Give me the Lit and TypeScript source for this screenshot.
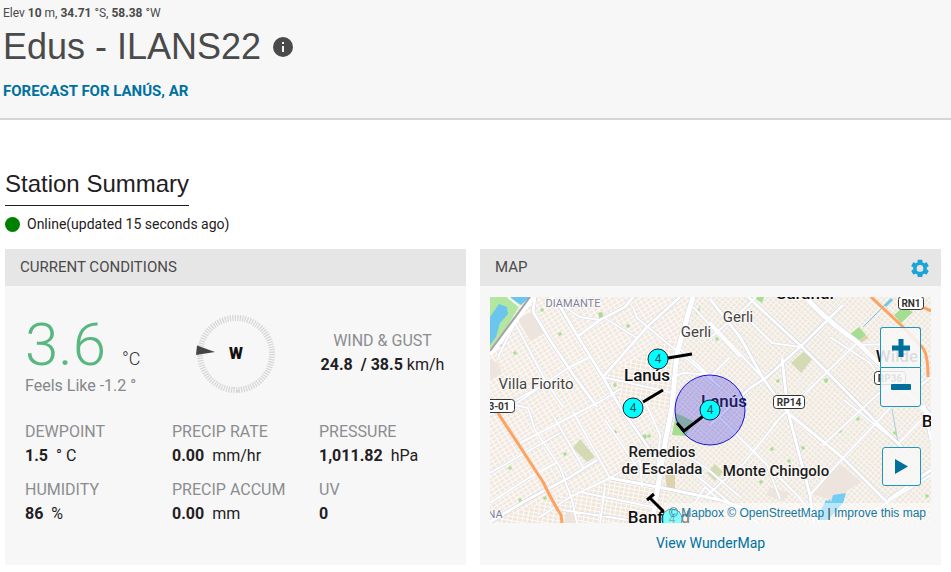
import { LitElement, html, svg, css } from 'lit';
import { customElement, property } from 'lit/decorators.js';

interface Reading {
  label: string;
  value: string;
  unit: string;
}

const readings: Reading[] = [
  { label: 'DEWPOINT', value: '1.5', unit: '° C' },
  { label: 'PRECIP RATE', value: '0.00', unit: 'mm/hr' },
  { label: 'PRESSURE', value: '1,011.82', unit: 'hPa' },
  { label: 'HUMIDITY', value: '86', unit: '%' },
  { label: 'PRECIP ACCUM', value: '0.00', unit: 'mm' },
  { label: 'UV', value: '0', unit: '' },
];

const minorRoads = [
  'M8 60 25 26 55 83 73 110', 'M25 108 38 111 45 133 70 170 82 203 87 226',
  'M83 115 120 181', 'M115 123 147 170', 'M143 10 147 21 177 46 190 56 230 90',
  'M113 20 147 41', 'M27 106 78 71 100 60', 'M0 118 24 104 60 84', 'M0 176 70 136',
  'M30 146 113 103 130 92', 'M0 206 40 180 66 166', 'M50 220 80 200 120 181 150 163',
  'M90 195 162 210', 'M73 213 157 226', 'M113 80 183 96', 'M183 80 193 76 230 78',
  'M203 10 250 60', 'M221 40 252 14 266 0', 'M188 50 210 70 224 84',
  'M220 25 273 81', 'M283 128 337 75 367 46', 'M333 148 387 98 404 84',
  'M220 111 307 198 330 226', 'M240 178 254 166 287 125', 'M215 200 254 166',
  'M320 198 353 161 387 125 433 75', 'M409 146 438 116', 'M354 103 408 146',
  'M196 170 240 206 268 226', 'M183 150 215 170 250 200', 'M380 216 441 178',
  'M60 0 90 20 110 23', 'M250 14 282 46 310 50', 'M340 40 380 66 400 96',
  'M368 48 400 47 428 52', 'M430 110 441 118', 'M426 92 441 80',
  'M115 190 110 226', 'M150 163 152 190', 'M276 165 290 202', 'M64 120 94 172',
  'M153 100 170 138 168 170', 'M205 206 215 190 230 204', 'M240 60 220 80',
];

const majorRoads = [
  'M45 0 43 15 62 46 82 76 107 110', 'M62 0 68 6 90 43 113 80 130 110 165 160',
  'M87 40 110 23 135 10 143 0', 'M190 0 157 30 113 80', 'M0 225 37 203 80 180 107 163',
  'M120 181 183 193 230 203 262 214', 'M258 0 313 51 337 75 387 126 420 158',
  'M220 128 260 91 277 80 310 50 353 8', 'M220 2 250 40 273 81 297 115 353 161 398 206',
  'M292 61 298 115 320 198 324 226', 'M398 203 441 173', 'M434 108 441 143',
];

const trees = [
  [52, 13], [70, 37], [138, 29], [25, 56], [125, 88], [101, 61], [20, 171], [30, 203],
  [55, 201], [75, 157], [159, 139], [125, 135], [227, 42], [288, 84], [336, 84], [336, 83],
  [350, 134], [405, 136], [368, 122], [299, 164], [271, 185], [313, 151], [437, 199], [282, 152],
];

const places = [
  { name: 'DIAMANTE', x: 83, y: 10, kind: 'district' },
  { name: 'NA', x: 5, y: 221, kind: 'district' },
  { name: 'Gerli', x: 248, y: 25, kind: 'town' },
  { name: 'Gerli', x: 206, y: 40, kind: 'town' },
  { name: 'Villa Fiorito', x: 46, y: 92, kind: 'town' },
  { name: 'Sarandí', x: 315, y: 2, kind: 'city' },
  { name: 'Lanús', x: 157, y: 84, kind: 'city' },
  { name: 'Lanús', x: 234, y: 110, kind: 'city' },
  { name: 'Wilde', x: 407, y: 65, kind: 'city' },
  { name: 'Remedios', x: 172, y: 160, kind: 'suburb' },
  { name: 'de Escalada', x: 172, y: 177, kind: 'suburb' },
  { name: 'Monte Chingolo', x: 286, y: 179, kind: 'suburb' },
  { name: 'Banfield', x: 169, y: 226, kind: 'city' },
  { name: 'B', x: 437, y: 130, kind: 'city' },
];

const shields = [
  { name: 'RN1', x: 421, y: 6, width: 25 },
  { name: 'RP14', x: 299, y: 105, width: 31 },
  { name: 'RP36', x: 400, y: 81, width: 31 },
  { name: '3-01', x: 9, y: 109, width: 31 },
];

const stations = [
  { x: 168, y: 62, barb: 'M178 61 202 57' },
  { x: 143, y: 111, barb: 'M153 105 173 93' },
  { x: 220, y: 113, barb: 'M216 117 194 134 187 126' },
  { x: 182, y: 222, barb: 'M174 215 160 201M157 203 164 197' },
];

@customElement('station-map')
class StationMap extends LitElement {
  static styles = css`
    :host {
      display: block;
      position: relative;
      overflow: hidden;
      font-family: Roboto, sans-serif;
    }
    .canvas {
      display: block;
      width: 100%;
      height: 226px;
    }
    .road {
      fill: none;
      stroke-linejoin: round;
    }
    .casing {
      stroke: #d9dcea;
      stroke-width: 3;
    }
    .minor {
      stroke: #fff;
      stroke-width: 2;
    }
    .casing-major {
      stroke: #cdd1e3;
      stroke-width: 4;
    }
    .major {
      stroke: #fff;
      stroke-width: 3;
    }
    .casing-trunk {
      stroke: #d3d7e6;
      stroke-width: 6;
    }
    .trunk {
      stroke: #fff;
      stroke-width: 5;
    }
    .highway {
      stroke: #fda262;
      stroke-width: 3;
    }
    .place {
      text-anchor: middle;
      stroke: #fff;
      stroke-width: 2;
      stroke-opacity: 0.7;
      paint-order: stroke;
    }
    .district {
      font-size: 11px;
      fill: #7c819c;
    }
    .town {
      font-size: 15px;
      fill: #444;
    }
    .suburb {
      font-size: 15px;
      font-weight: 500;
      fill: #1b1b1b;
    }
    .city {
      font-size: 17px;
      font-weight: 500;
      fill: #111;
    }
    .shield {
      fill: #fff;
      stroke: #333;
    }
    .shield-text {
      font-size: 10px;
      font-weight: 700;
      text-anchor: middle;
      fill: #333;
    }
    .barb {
      fill: none;
      stroke: #000;
      stroke-width: 3;
    }
    .dot {
      fill: #00ffff;
      stroke: #123;
      stroke-width: 1;
    }
    .dot-text {
      font-size: 12px;
      text-anchor: middle;
      fill: #14595c;
    }
    .zoom {
      position: absolute;
      top: 30px;
      right: 10px;
      display: flex;
      flex-direction: column;
    }
    .button {
      box-sizing: border-box;
      width: 41px;
      height: 40px;
      padding: 0;
      display: flex;
      align-items: center;
      justify-content: center;
      border: 1px solid #1c97bd;
      border-radius: 3px;
      background: rgba(247, 247, 247, 0.88);
      color: #006f9c;
      cursor: pointer;
    }
    .zoom-in {
      border-bottom: 0;
      border-radius: 3px 3px 0 0;
    }
    .zoom-out {
      border-radius: 0 0 3px 3px;
    }
    .play {
      position: absolute;
      right: 10px;
      bottom: 37px;
      width: 39px;
      height: 39px;
    }
    .attribution {
      position: absolute;
      right: 0;
      bottom: 0;
      padding: 0 5px;
      font: 12px/20px 'Liberation Sans', Arial, sans-serif;
      white-space: nowrap;
      color: #222;
      background: rgba(255, 255, 255, 0.5);
    }
    .attribution a {
      color: #1478a3;
      text-decoration: none;
    }
  `;

  render() {
    return html`
      <svg class="canvas" viewBox="0 0 441 226" preserveAspectRatio="xMidYMid slice" role="img" aria-label="Station map">
        <defs>
          <pattern id="west" width="5" height="4" patternUnits="userSpaceOnUse" patternTransform="rotate(-32)">
            <rect width="5" height="4" fill="#f1e9e1" />
            <path d="M0 0H5M0 0V4" stroke="#fdfaf6" stroke-width="2" />
          </pattern>
          <pattern id="east" width="4" height="4" patternUnits="userSpaceOnUse" patternTransform="rotate(42)">
            <rect width="4" height="4" fill="#eee7dd" />
            <path d="M0 0H4M0 0V4" stroke="#faf7f2" stroke-width="2" />
          </pattern>
          <pattern id="south" width="5" height="4" patternUnits="userSpaceOnUse" patternTransform="rotate(10)">
            <rect width="5" height="4" fill="#efe6dc" />
            <path d="M0 0H5M0 0V4" stroke="#fefbf7" stroke-width="2" />
          </pattern>
          <pattern id="hatch" width="3" height="3" patternUnits="userSpaceOnUse" patternTransform="rotate(40)">
            <path d="M0 0H3M0 0V3" stroke="#5a4ad0" stroke-opacity="0.15" />
          </pattern>
        </defs>
        ${this.renderLand()} ${this.renderRoads()}
        ${shields.map((shield) => this.renderShield(shield))}
        ${places.map((place) => svg`<text class="place ${place.kind}" x=${place.x} y=${place.y}>${place.name}</text>`)}
        <circle cx="220" cy="113" r="35" fill="#3c32e6" fill-opacity="0.27" />
        <circle cx="220" cy="113" r="35" fill="url(#hatch)" stroke="#1a14d8" />
        ${stations.map((station) => this.renderStation(station))}
      </svg>
      <div class="zoom">
        <button class="button zoom-in" aria-label="Zoom in">
          <svg width="18" height="18" viewBox="0 0 18 18"><path fill="currentColor" d="M6.500 0h5v6.500h6.500v5h-6.500v6.500h-5v-6.500H0v-5h6.500z" /></svg>
        </button>
        <button class="button zoom-out" aria-label="Zoom out">
          <svg width="20" height="6" viewBox="0 0 20 6"><rect width="20" height="6" rx="1" fill="currentColor" /></svg>
        </button>
      </div>
      <button class="button play" aria-label="Play">
        <svg width="13" height="15" viewBox="0 0 13 15"><path fill="currentColor" d="M0 0 13 7.500 0 15z" /></svg>
      </button>
      <div class="attribution">
        <a href="#mapbox">© Mapbox</a> <a href="#osm">© OpenStreetMap</a> | <a href="#improve">Improve this map</a>
      </div>
    `;
  }

  renderLand() {
    return svg`
      <rect width="441" height="226" fill="url(#east)" />
      <path fill="url(#west)" d="M0 0H203L182 110 120 181 0 226z" />
      <path fill="url(#south)" d="M120 181 183 193 162 226H0L80 195z" />
      <path fill="url(#south)" d="M113 80 187 40 182 113 130 106z" />
      <path fill="#ede5dd" d="M28 22 44 14 55 36 40 44z" />
      <path fill="#ede5dd" d="M0 62 8 66 12 76 0 84z" />
      <path fill="#ede5dd" d="M349 166 372 185 341 203 319 196z" />
      <path fill="#ede5dd" d="M280 190 300 196 292 204 276 198z" />
      <path fill="#ede5dd" d="M76 214 84 212 86 226H74z" />
      <path fill="#b3e6a0" d="M0 0H24L30 8 17 30 0 52z" />
      <path fill="#6cc5ec" d="M9 7 17 10 18 17 10 26 6 40 0 48V20z" />
      <path fill="#6cc5ec" d="M20 0H40L31 8z" />
      <path fill="#6cc5ec" d="M10 47 15 50 13 51z" />
      <path fill="none" stroke="#fff" stroke-width="2" d="M18 0 29 9" />
      <path fill="#a5dd91" d="M359 38 369 30 376 38 366 46zM404 18 413 10 423 15 411 26zM263 0H274L272 6z" />
      <path fill="#a5dd91" d="M108 16 112 15 114 22 110 23zM206 17 210 9 209 17zM151 139 156 137 157 141 151 143z" />
      <path fill="#a5dd91" d="M182 138 186 116 203 124 196 139z" />
      <path fill="#d3dab4" d="M301 66 313 55 323 61 311 76zM83 151 90 142 105 160 97 165zM217 176 225 167 233 175 225 184z" />
      <path fill="#ded2ac" d="M175 178H185V192H177zM366 46 376 38 379 41 369 47z" />
      <path fill="#73cef3" d="M343 198 356 196 353 206 338 223H326L336 203 338 204 340 202 341 205z" />
      <path fill="none" stroke="#a9cfe0" d="M402 112 408 146" />
      <path fill="none" stroke="#73c6e8" d="M401 2 373 30" />
      <path fill="none" stroke="#73c6e8" stroke-width="3" d="M402 2 395 9" />
      ${trees.map(([x, y]) => svg`<path fill="#a9df95" d="M${x - 2} ${y - 1}l3-1 1 3-3 1z" />`)}
    `;
  }

  renderRoads() {
    const minor = minorRoads.join('');
    const major = majorRoads.join('');
    const trunk = 'M203 0 187 56 182 110 175 146 162 226M316 0Q330 18 367 45L393 70 441 120';
    return svg`
      <path class="road casing" d=${minor} />
      <path class="road casing-major" d=${major} />
      <path class="road casing-trunk" d=${trunk} />
      <path class="road minor" d=${minor} />
      <path class="road major" d=${major} />
      <path class="road trunk" d=${trunk} />
      <path class="road trunk" d="M43 0 0 57" />
      <path class="road" stroke="#a3a3a8" stroke-width="2" d="M40 0 0 54" />
      <path class="road highway" d="M381 0 411 28 432 50Q438 56 438 80M428 8 441 14M8 116 53 185Q62 204 71 218L72 226" />
    `;
  }

  renderShield(shield: { name: string; x: number; y: number; width: number }) {
    return svg`
      <rect class="shield" x=${shield.x - shield.width / 2} y=${shield.y - 6.5} width=${shield.width} height="13" rx="3" />
      <text class="shield-text" x=${shield.x} y=${shield.y + 3.5}>${shield.name}</text>
    `;
  }

  renderStation(station: { x: number; y: number; barb: string }) {
    return svg`
      <path class="barb" d=${station.barb} />
      <circle class="dot" cx=${station.x} cy=${station.y} r="10" />
      <text class="dot-text" x=${station.x} y=${station.y + 4}>4</text>
    `;
  }
}

@customElement('current-conditions')
class CurrentConditions extends LitElement {
  @property({ type: Array }) readings: Reading[] = [];

  static styles = css`
    :host {
      display: block;
      padding: 29px 10px 0;
      font: 16px/24px Roboto, sans-serif;
      color: #1f2023;
    }
    .grid {
      display: grid;
      grid-template-columns: repeat(3, 1fr);
    }
    .now {
      padding-bottom: 22px;
    }
    .cell {
      padding: 0 10px 10px;
      white-space: nowrap;
    }
    .temp {
      padding: 0 10px;
      white-space: nowrap;
      color: #85878a;
    }
    .reading {
      display: flex;
      align-items: baseline;
      gap: 16px;
      height: 59px;
    }
    .degrees {
      font-size: 60px;
      font-weight: 300;
      line-height: 60px;
      color: #57b77e;
    }
    .unit {
      font-size: 18px;
      font-weight: 300;
      color: #333;
    }
    .rose {
      display: flex;
      justify-content: center;
      align-items: flex-start;
    }
    .compass {
      width: 80px;
      height: 78px;
      overflow: visible;
    }
    .direction {
      font-size: 16px;
      font-weight: 900;
      text-anchor: middle;
      fill: #111;
    }
    .wind {
      padding-top: 14px;
      text-align: center;
      white-space: nowrap;
    }
    .label {
      color: #8b8d90;
    }
    .amount {
      margin-right: 4px;
    }
  `;

  render() {
    return html`
      <div class="grid now">
        <div class="temp">
          <div class="reading"><span class="degrees">3.6</span><span class="unit">°C</span></div>
          Feels Like -1.2 °
        </div>
        <div class="rose">
          <svg class="compass" viewBox="0 0 80 78" role="img" aria-label="Wind from the west">
            <circle cx="40" cy="39" r="36" fill="none" stroke="#d6d6d6" stroke-width="6" pathLength="180" stroke-dasharray="1 1" />
            <path fill="#444" d="M1 30.500 19 37 0 40z" />
            <text class="direction" x="40" y="44">W</text>
          </svg>
        </div>
        <div class="wind">
          <div class="label">WIND &amp; GUST</div>
          <b>24.8 &nbsp;/ 38.5</b> km/h
        </div>
      </div>
      <div class="grid">${this.readings.map((reading) => this.renderReading(reading))}</div>
    `;
  }

  renderReading(reading: Reading) {
    return html`
      <div class="cell">
        <div class="label">${reading.label}</div>
        <b class="amount">${reading.value}</b> ${reading.unit}
      </div>
    `;
  }
}

@customElement('app-root')
class AppRoot extends LitElement {
  static styles = css`
    :host {
      display: block;
      font-family: Roboto, sans-serif;
      color: #1f2023;
    }
    .header {
      padding: 4px 3px 17px;
      background: #f7f7f7;
      border-bottom: 2px solid #d5d5d5;
      color: #4a4a4a;
    }
    .position {
      font-size: 12px;
      line-height: 18px;
    }
    .heading {
      display: flex;
      align-items: center;
      gap: 12px;
      margin: 5px 0 14px;
    }
    .station {
      margin: 0;
      font: 36px/40px 'Liberation Sans', Arial, sans-serif;
    }
    .info {
      display: flex;
      padding: 0;
      border: 0;
      background: none;
      color: #4a4a4a;
      cursor: pointer;
    }
    .forecast {
      display: block;
      font-size: 15px;
      font-weight: 700;
      line-height: 20px;
      color: #00719f;
      text-decoration: none;
    }
    .main {
      padding: 50px 10px 7px 5px;
    }
    .summary {
      width: fit-content;
      margin: 0 0 8px;
      padding-bottom: 7px;
      border-bottom: 1px solid #1f2023;
      font: 24px/28px 'Liberation Sans', Arial, sans-serif;
    }
    .status {
      display: flex;
      align-items: center;
      gap: 7px;
      margin-bottom: 15px;
      font-size: 14px;
      line-height: 20px;
    }
    .online {
      width: 15px;
      height: 15px;
      border-radius: 50%;
      background: #008000;
    }
    .panels {
      display: grid;
      grid-template-columns: 1fr 1fr;
      gap: 14px;
    }
    .panel {
      background: #f7f7f7;
    }
    .bar {
      display: flex;
      align-items: center;
      justify-content: space-between;
      padding: 0 12px 0 15px;
      background: #e6e6e6;
    }
    .title {
      margin: 0;
      font-size: 15px;
      font-weight: 400;
      line-height: 37px;
      color: #4a4a4a;
    }
    .settings {
      display: flex;
      padding: 0;
      border: 0;
      background: none;
      color: #1ea3d8;
      cursor: pointer;
    }
    .map {
      margin: 11px 10px 10px;
    }
    .more {
      padding-bottom: 12px;
      text-align: center;
      font-size: 14px;
      line-height: 20px;
    }
    .more a {
      color: #00719f;
      text-decoration: none;
    }
  `;

  render() {
    return html`
      <header class="header">
        <div class="position">Elev <b>10</b> m, <b>34.71</b> °S, <b>58.38</b> °W</div>
        <div class="heading">
          <h1 class="station">Edus - ILANS22</h1>
          <button class="info" aria-label="Station info">
            <svg width="20" height="20" viewBox="0 0 20 20">
              <circle cx="10" cy="10" r="10" fill="currentColor" />
              <path fill="#f7f7f7" d="M9 5h2v2H9zM9 9h2v6H9z" />
            </svg>
          </button>
        </div>
        <a class="forecast" href="#forecast">FORECAST FOR LANÚS, AR</a>
      </header>
      <main class="main">
        <h2 class="summary">Station Summary</h2>
        <div class="status"><span class="online"></span>Online(updated 15 seconds ago)</div>
        <div class="panels">
          <section class="panel">
            <div class="bar"><h3 class="title">CURRENT CONDITIONS</h3></div>
            <current-conditions .readings=${readings}></current-conditions>
          </section>
          <section class="panel">
            <div class="bar">
              <h3 class="title">MAP</h3>
              <button class="settings" aria-label="Map settings">
                <svg width="18" height="18" viewBox="0 0 24 24">
                  <path
                    fill="currentColor"
                    fill-rule="evenodd"
                    d="M9 1h6l.6 3.500 2 1.200 3.300-1.300 2.800 4.900-2.700 2.100v2.400l2.700 2.100-2.800 4.900-3.300-1.300-2 1.200L15 24H9l-.6-3.300-2-1.200-3.300 1.300-2.800-4.900L3 13.800v-2.400L.3 9.300l2.800-4.900 3.300 1.300 2-1.200zM12 8a4.500 4.500 0 1 0 0 9 4.500 4.500 0 1 0 0-9z"
                  />
                </svg>
              </button>
            </div>
            <station-map class="map"></station-map>
            <div class="more"><a href="#wundermap">View WunderMap</a></div>
          </section>
        </div>
      </main>
    `;
  }
}
